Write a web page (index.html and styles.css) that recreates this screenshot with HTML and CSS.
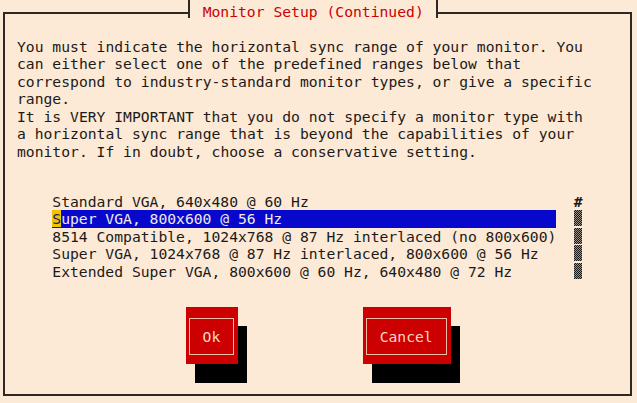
FILE: index.html
```html
<!DOCTYPE html>
<html lang="en">
<head>
    <meta charset="UTF-8">
    <meta name="viewport" content="width=device-width, initial-scale=1.0">
    <title>Monitor Setup (Continued)</title>
    <link rel="stylesheet" href="styles.css">
</head>
<body>
    <div class="dialog">
        <div class="title">
            <span class="tick tick-left"></span>
            <span class="title-text">Monitor Setup (Continued)</span>
            <span class="tick tick-right"></span>
        </div>

        <div class="intro">
            <div>You must indicate the horizontal sync range of your monitor. You</div>
            <div>can either select one of the predefined ranges below that</div>
            <div>correspond to industry-standard monitor types, or give a specific</div>
            <div>range.</div>
            <div>It is VERY IMPORTANT that you do not specify a monitor type with</div>
            <div>a horizontal sync range that is beyond the capabilities of your</div>
            <div>monitor. If in doubt, choose a conservative setting.</div>
        </div>

        <div class="picker">
            <ul class="options">
                <li>Standard VGA, 640x480 @ 60 Hz</li>
                <li class="selected"><span class="cursor">S</span>uper VGA, 800x600 @ 56 Hz</li>
                <li>8514 Compatible, 1024x768 @ 87 Hz interlaced (no 800x600)</li>
                <li>Super VGA, 1024x768 @ 87 Hz interlaced, 800x600 @ 56 Hz</li>
                <li>Extended Super VGA, 800x600 @ 60 Hz, 640x480 @ 72 Hz</li>
            </ul>
            <div class="scrollbar">
                <span class="scroll-mark">#</span>
                <span class="shade"></span>
                <span class="shade"></span>
                <span class="shade"></span>
                <span class="shade"></span>
            </div>
        </div>

        <div class="buttons">
            <button class="btn btn-ok"><span class="btn-label">Ok</span></button>
            <button class="btn btn-cancel"><span class="btn-label">Cancel</span></button>
        </div>
    </div>
</body>
</html>
```

FILE: styles.css
```css
:root {
    --bg: #fce9d6;
    --ink: #1c1a18;
    --line: #2e2824;
    --cw: 8.84px;
    --row: 17.52px;
}

* {
    margin: 0;
    padding: 0;
    box-sizing: border-box;
}

body {
    background-color: var(--bg);
    color: var(--ink);
    font-family: 'DejaVu Sans Mono', 'Liberation Mono', monospace;
    font-size: 14.7px;
    line-height: var(--row);
    width: 637px;
    height: 403px;
    overflow: hidden;
}

.dialog {
    margin: 12px 0 0 3px;
    width: 629px;
    height: 384px;
    border: 2px solid var(--line);
}

/* title sits across the top frame line */
.title {
    display: flex;
    height: 18px;
    margin-top: -14px;
    padding-left: 180px;
}

.tick {
    width: var(--cw);
    height: 18px;
}

.tick-left {
    background:
        linear-gradient(var(--line), var(--line)) center / 2px 100% no-repeat,
        linear-gradient(to right, transparent 50%, var(--bg) 50%);
}

.tick-right {
    background:
        linear-gradient(var(--line), var(--line)) center / 2px 100% no-repeat,
        linear-gradient(to left, transparent 50%, var(--bg) 50%);
}

.title-text {
    padding: 3px var(--cw) 0;
    line-height: 18px;
    color: #cc0000;
    background-color: var(--bg);
}

.intro {
    margin-top: 19.5px;
    padding-left: 12px;
}

.intro div {
    height: var(--row);
    white-space: pre;
}

.picker {
    display: grid;
    grid-template-columns: calc(57 * var(--cw)) var(--cw);
    column-gap: calc(2 * var(--cw));
    margin-top: 32.6px;
    padding-left: 47.3px;
}

.options {
    list-style: none;
}

.options li {
    height: var(--row);
    white-space: pre;
}

.options .selected {
    background-color: #0808cc;
    color: #eeeae6;
}

.cursor {
    background-color: #f0c400;
    color: #1a1a60;
}

.scrollbar {
    display: flex;
    flex-direction: column;
    align-items: center;
}

.scroll-mark {
    height: var(--row);
    font-weight: bold;
}

.shade {
    width: 8px;
    height: 16px;
    margin-bottom: 1.52px;
    background: repeating-conic-gradient(#1a1a1a 0 25%, #9a9088 0 50%) 0 0 / 2px 2px;
}

.buttons {
    display: flex;
    gap: 124.5px;
    margin-top: 26.7px;
    padding-left: 180.7px;
}

.btn {
    display: flex;
    height: 57px;
    padding: 11px 4px 9px 3px;
    border: none;
    background-color: #cc0000;
    box-shadow: 9px 19px 0 #000;
    font: inherit;
    color: #f8d6c4;
}

.btn-ok {
    width: 52.5px;
}

.btn-cancel {
    width: 88px;
}

.btn-label {
    flex: 1;
    display: flex;
    align-items: center;
    justify-content: center;
    border: 1px solid #f2bca6;
}
```
